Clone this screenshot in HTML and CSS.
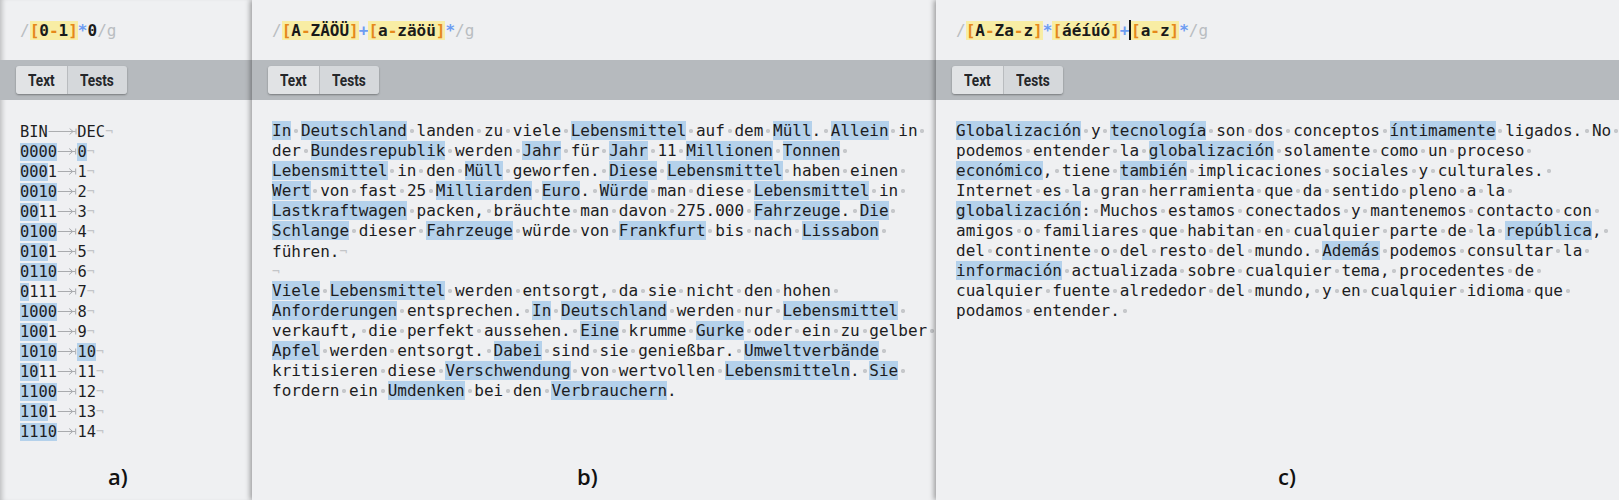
FILE: index.html
```html
<!DOCTYPE html>
<html lang="de">
<head>
<meta charset="utf-8">
<title>Regex tester panels</title>
<link rel="stylesheet" href="styles.css">
</head>
<body>
<div class="page">

  <section class="panel panel-a">
    <div class="regex"><span class="dl">/</span><span class="cls"><span class="br">[</span>0<span class="br">-</span>1<span class="br">]</span></span><span class="q">*</span>0<span class="dl">/g</span></div>
    <div class="toolbar"><div class="tabs"><span class="btn on"><span class="bt">Text</span></span><span class="btn"><span class="bt">Tests</span></span></div></div>
    <div class="code code-a">
      <div class="ln">BIN<svg class="tab w3" viewBox="0 0 30 20"><path d="M0.5 10.5H28M22 7.5L25.5 10.5L22 13.5M28.5 7.5V13.5"/></svg>DEC<i class="p">¬</i></div>
      <div class="ln"><b class="m">0000</b><svg class="tab w4" viewBox="0 0 20 20"><path d="M0.5 10.5H18M12 7.5L15.5 10.5L12 13.5M18.5 7.5V13.5"/></svg><b class="m">0</b><i class="p">¬</i></div>
      <div class="ln"><b class="m">000</b>1<svg class="tab w4" viewBox="0 0 20 20"><path d="M0.5 10.5H18M12 7.5L15.5 10.5L12 13.5M18.5 7.5V13.5"/></svg>1<i class="p">¬</i></div>
      <div class="ln"><b class="m">0010</b><svg class="tab w4" viewBox="0 0 20 20"><path d="M0.5 10.5H18M12 7.5L15.5 10.5L12 13.5M18.5 7.5V13.5"/></svg>2<i class="p">¬</i></div>
      <div class="ln"><b class="m">00</b>11<svg class="tab w4" viewBox="0 0 20 20"><path d="M0.5 10.5H18M12 7.5L15.5 10.5L12 13.5M18.5 7.5V13.5"/></svg>3<i class="p">¬</i></div>
      <div class="ln"><b class="m">0100</b><svg class="tab w4" viewBox="0 0 20 20"><path d="M0.5 10.5H18M12 7.5L15.5 10.5L12 13.5M18.5 7.5V13.5"/></svg>4<i class="p">¬</i></div>
      <div class="ln"><b class="m">010</b>1<svg class="tab w4" viewBox="0 0 20 20"><path d="M0.5 10.5H18M12 7.5L15.5 10.5L12 13.5M18.5 7.5V13.5"/></svg>5<i class="p">¬</i></div>
      <div class="ln"><b class="m">0110</b><svg class="tab w4" viewBox="0 0 20 20"><path d="M0.5 10.5H18M12 7.5L15.5 10.5L12 13.5M18.5 7.5V13.5"/></svg>6<i class="p">¬</i></div>
      <div class="ln"><b class="m">0</b>111<svg class="tab w4" viewBox="0 0 20 20"><path d="M0.5 10.5H18M12 7.5L15.5 10.5L12 13.5M18.5 7.5V13.5"/></svg>7<i class="p">¬</i></div>
      <div class="ln"><b class="m">1000</b><svg class="tab w4" viewBox="0 0 20 20"><path d="M0.5 10.5H18M12 7.5L15.5 10.5L12 13.5M18.5 7.5V13.5"/></svg>8<i class="p">¬</i></div>
      <div class="ln"><b class="m">100</b>1<svg class="tab w4" viewBox="0 0 20 20"><path d="M0.5 10.5H18M12 7.5L15.5 10.5L12 13.5M18.5 7.5V13.5"/></svg>9<i class="p">¬</i></div>
      <div class="ln"><b class="m">1010</b><svg class="tab w4" viewBox="0 0 20 20"><path d="M0.5 10.5H18M12 7.5L15.5 10.5L12 13.5M18.5 7.5V13.5"/></svg><b class="m">10</b><i class="p">¬</i></div>
      <div class="ln"><b class="m">10</b>11<svg class="tab w4" viewBox="0 0 20 20"><path d="M0.5 10.5H18M12 7.5L15.5 10.5L12 13.5M18.5 7.5V13.5"/></svg>11<i class="p">¬</i></div>
      <div class="ln"><b class="m">1100</b><svg class="tab w4" viewBox="0 0 20 20"><path d="M0.5 10.5H18M12 7.5L15.5 10.5L12 13.5M18.5 7.5V13.5"/></svg>12<i class="p">¬</i></div>
      <div class="ln"><b class="m">110</b>1<svg class="tab w4" viewBox="0 0 20 20"><path d="M0.5 10.5H18M12 7.5L15.5 10.5L12 13.5M18.5 7.5V13.5"/></svg>13<i class="p">¬</i></div>
      <div class="ln"><b class="m">1110</b><svg class="tab w4" viewBox="0 0 20 20"><path d="M0.5 10.5H18M12 7.5L15.5 10.5L12 13.5M18.5 7.5V13.5"/></svg>14<i class="p">¬</i></div>
    </div>
    <div class="label label-a">a)</div>
  </section>

  <section class="panel panel-b">
    <div class="regex"><span class="dl">/</span><span class="cls"><span class="br">[</span>A<span class="br">-</span>ZÄÖÜ<span class="br">]</span></span><span class="q">+</span><span class="cls"><span class="br">[</span>a<span class="br">-</span>zäöü<span class="br">]</span></span><span class="q">*</span><span class="dl">/g</span></div>
    <div class="toolbar"><div class="tabs"><span class="btn on"><span class="bt">Text</span></span><span class="btn"><span class="bt">Tests</span></span></div></div>
    <div class="code">
      <div class="ln"><b class="m">In</b><i class="s"> </i><b class="m">Deutschland</b><i class="s"> </i>landen<i class="s"> </i>zu<i class="s"> </i>viele<i class="s"> </i><b class="m">Lebensmittel</b><i class="s"> </i>auf<i class="s"> </i>dem<i class="s"> </i><b class="m">Müll</b>.<i class="s"> </i><b class="m">Allein</b><i class="s"> </i>in<i class="s"> </i></div>
      <div class="ln">der<i class="s"> </i><b class="m">Bundesrepublik</b><i class="s"> </i>werden<i class="s"> </i><b class="m">Jahr</b><i class="s"> </i>für<i class="s"> </i><b class="m">Jahr</b><i class="s"> </i>11<i class="s"> </i><b class="m">Millionen</b><i class="s"> </i><b class="m">Tonnen</b><i class="s"> </i></div>
      <div class="ln"><b class="m">Lebensmittel</b><i class="s"> </i>in<i class="s"> </i>den<i class="s"> </i><b class="m">Müll</b><i class="s"> </i>geworfen.<i class="s"> </i><b class="m">Diese</b><i class="s"> </i><b class="m">Lebensmittel</b><i class="s"> </i>haben<i class="s"> </i>einen<i class="s"> </i></div>
      <div class="ln"><b class="m">Wert</b><i class="s"> </i>von<i class="s"> </i>fast<i class="s"> </i>25<i class="s"> </i><b class="m">Milliarden</b><i class="s"> </i><b class="m">Euro</b>.<i class="s"> </i><b class="m">Würde</b><i class="s"> </i>man<i class="s"> </i>diese<i class="s"> </i><b class="m">Lebensmittel</b><i class="s"> </i>in<i class="s"> </i></div>
      <div class="ln"><b class="m">Lastkraftwagen</b><i class="s"> </i>packen,<i class="s"> </i>bräuchte<i class="s"> </i>man<i class="s"> </i>davon<i class="s"> </i>275.000<i class="s"> </i><b class="m">Fahrzeuge</b>.<i class="s"> </i><b class="m">Die</b><i class="s"> </i></div>
      <div class="ln"><b class="m">Schlange</b><i class="s"> </i>dieser<i class="s"> </i><b class="m">Fahrzeuge</b><i class="s"> </i>würde<i class="s"> </i>von<i class="s"> </i><b class="m">Frankfurt</b><i class="s"> </i>bis<i class="s"> </i>nach<i class="s"> </i><b class="m">Lissabon</b><i class="s"> </i></div>
      <div class="ln">führen.<i class="p">¬</i></div>
      <div class="ln"><i class="p">¬</i></div>
      <div class="ln"><b class="m">Viele</b><i class="s"> </i><b class="m">Lebensmittel</b><i class="s"> </i>werden<i class="s"> </i>entsorgt,<i class="s"> </i>da<i class="s"> </i>sie<i class="s"> </i>nicht<i class="s"> </i>den<i class="s"> </i>hohen<i class="s"> </i></div>
      <div class="ln"><b class="m">Anforderungen</b><i class="s"> </i>entsprechen.<i class="s"> </i><b class="m">In</b><i class="s"> </i><b class="m">Deutschland</b><i class="s"> </i>werden<i class="s"> </i>nur<i class="s"> </i><b class="m">Lebensmittel</b><i class="s"> </i></div>
      <div class="ln">verkauft,<i class="s"> </i>die<i class="s"> </i>perfekt<i class="s"> </i>aussehen.<i class="s"> </i><b class="m">Eine</b><i class="s"> </i>krumme<i class="s"> </i><b class="m">Gurke</b><i class="s"> </i>oder<i class="s"> </i>ein<i class="s"> </i>zu<i class="s"> </i>gelber<i class="s"> </i></div>
      <div class="ln"><b class="m">Apfel</b><i class="s"> </i>werden<i class="s"> </i>entsorgt.<i class="s"> </i><b class="m">Dabei</b><i class="s"> </i>sind<i class="s"> </i>sie<i class="s"> </i>genießbar.<i class="s"> </i><b class="m">Umweltverbände</b><i class="s"> </i></div>
      <div class="ln">kritisieren<i class="s"> </i>diese<i class="s"> </i><b class="m">Verschwendung</b><i class="s"> </i>von<i class="s"> </i>wertvollen<i class="s"> </i><b class="m">Lebensmitteln</b>.<i class="s"> </i><b class="m">Sie</b><i class="s"> </i></div>
      <div class="ln">fordern<i class="s"> </i>ein<i class="s"> </i><b class="m">Umdenken</b><i class="s"> </i>bei<i class="s"> </i>den<i class="s"> </i><b class="m">Verbrauchern</b>.</div>
    </div>
    <div class="label label-b">b)</div>
  </section>

  <section class="panel panel-c">
    <div class="regex"><span class="dl">/</span><span class="cls"><span class="br">[</span>A<span class="br">-</span>Za<span class="br">-</span>z<span class="br">]</span></span><span class="q">*</span><span class="cls"><span class="br">[</span>áéíúó<span class="br">]</span></span><span class="q">+</span><span class="caret"></span><span class="cls"><span class="br">[</span>a<span class="br">-</span>z<span class="br">]</span></span><span class="q">*</span><span class="dl">/g</span></div>
    <div class="toolbar"><div class="tabs"><span class="btn on"><span class="bt">Text</span></span><span class="btn"><span class="bt">Tests</span></span></div></div>
    <div class="code">
      <div class="ln"><b class="m">Globalización</b><i class="s"> </i>y<i class="s"> </i><b class="m">tecnología</b><i class="s"> </i>son<i class="s"> </i>dos<i class="s"> </i>conceptos<i class="s"> </i><b class="m">íntimamente</b><i class="s"> </i>ligados.<i class="s"> </i>No<i class="s"> </i></div>
      <div class="ln">podemos<i class="s"> </i>entender<i class="s"> </i>la<i class="s"> </i><b class="m">globalización</b><i class="s"> </i>solamente<i class="s"> </i>como<i class="s"> </i>un<i class="s"> </i>proceso<i class="s"> </i></div>
      <div class="ln"><b class="m">económico</b>,<i class="s"> </i>tiene<i class="s"> </i><b class="m">también</b><i class="s"> </i>implicaciones<i class="s"> </i>sociales<i class="s"> </i>y<i class="s"> </i>culturales.<i class="s"> </i></div>
      <div class="ln">Internet<i class="s"> </i>es<i class="s"> </i>la<i class="s"> </i>gran<i class="s"> </i>herramienta<i class="s"> </i>que<i class="s"> </i>da<i class="s"> </i>sentido<i class="s"> </i>pleno<i class="s"> </i>a<i class="s"> </i>la<i class="s"> </i></div>
      <div class="ln"><b class="m">globalización</b>:<i class="s"> </i>Muchos<i class="s"> </i>estamos<i class="s"> </i>conectados<i class="s"> </i>y<i class="s"> </i>mantenemos<i class="s"> </i>contacto<i class="s"> </i>con<i class="s"> </i></div>
      <div class="ln">amigos<i class="s"> </i>o<i class="s"> </i>familiares<i class="s"> </i>que<i class="s"> </i>habitan<i class="s"> </i>en<i class="s"> </i>cualquier<i class="s"> </i>parte<i class="s"> </i>de<i class="s"> </i>la<i class="s"> </i><b class="m">república</b>,<i class="s"> </i></div>
      <div class="ln">del<i class="s"> </i>continente<i class="s"> </i>o<i class="s"> </i>del<i class="s"> </i>resto<i class="s"> </i>del<i class="s"> </i>mundo.<i class="s"> </i><b class="m">Además</b><i class="s"> </i>podemos<i class="s"> </i>consultar<i class="s"> </i>la<i class="s"> </i></div>
      <div class="ln"><b class="m">información</b><i class="s"> </i>actualizada<i class="s"> </i>sobre<i class="s"> </i>cualquier<i class="s"> </i>tema,<i class="s"> </i>procedentes<i class="s"> </i>de<i class="s"> </i></div>
      <div class="ln">cualquier<i class="s"> </i>fuente<i class="s"> </i>alrededor<i class="s"> </i>del<i class="s"> </i>mundo,<i class="s"> </i>y<i class="s"> </i>en<i class="s"> </i>cualquier<i class="s"> </i>idioma<i class="s"> </i>que<i class="s"> </i></div>
      <div class="ln">podamos<i class="s"> </i>entender.<i class="s"> </i></div>
    </div>
    <div class="label label-c">c)</div>
  </section>

</div>
</body>
</html>
```

FILE: styles.css
```css
html, body {
  margin: 0;
  padding: 0;
  background: #eff0f2;
}

.page {
  display: flex;
  height: 500px;
  width: 1619px;
  overflow: hidden;
}

.panel {
  position: relative;
  display: flex;
  flex-direction: column;
  height: 500px;
  background: #eff0f2;
  overflow: hidden;
}

.panel-a {
  width: 252px;
  flex: none;
  z-index: 1;
  box-shadow: inset 5px 0 5px -3px rgba(0, 0, 0, 0.22);
}

.panel-b {
  width: 684px;
  flex: none;
  z-index: 2;
  box-shadow: -2px 0 5px rgba(0, 0, 0, 0.35);
}

.panel-c {
  flex: 1;
  z-index: 3;
  box-shadow: -2px 0 5px rgba(0, 0, 0, 0.35);
}

/* regex line */
.regex {
  height: 60px;
  padding: 0 20px;
  display: flex;
  align-items: center;
  font-family: "DejaVu Sans Mono", "Liberation Mono", monospace;
  font-size: 16px;
  font-weight: bold;
  color: #1a1a1a;
  white-space: pre;
}

.regex .dl {
  color: #b9bdc1;
  font-weight: normal;
}

.regex .cls {
  background: #f8eda4;
}

.regex .br {
  color: #e5881b;
}

.regex .q {
  color: #6d9cf2;
}

.regex .caret {
  display: inline-block;
  width: 1.5px;
  height: 20px;
  background: #111;
}

/* toolbar */
.toolbar {
  height: 40px;
  box-sizing: border-box;
  padding: 6px 16px;
  background: #b6babe;
  flex: none;
}

.tabs {
  display: inline-flex;
  height: 28px;
  border-radius: 3px;
  box-shadow: 0 1px 2px rgba(0, 0, 0, 0.35);
  overflow: hidden;
}

.btn {
  display: flex;
  align-items: center;
  padding: 0 12px;
  background: #d5d8db;
  font-family: Roboto, "Liberation Sans", sans-serif;
  font-weight: bold;
  font-size: 17px;
  color: #25272a;
}

.btn.on {
  background: #e1e3e5;
  border-right: 1px solid #b9bcbf;
}

.bt {
  display: inline-block;
  transform: scaleX(0.8);
  transform-origin: left center;
  margin-right: -6px;
}

.btn:not(.on) .bt {
  margin-right: -8px;
}

/* code area */
.code {
  padding: 21px 20px 0;
  font-family: "DejaVu Sans Mono", "Liberation Mono", monospace;
  font-size: 16px;
  line-height: 20px;
  color: #1d1d1f;
}

.code-a {
  font-size: 15.4px;
}

.ln {
  white-space: pre;
  height: 20px;
}

.m {
  font-weight: normal;
  background: #b4d1eb;
}

.s {
  font-style: normal;
  background: radial-gradient(circle, #c6c8cb 0, #c6c8cb 1.8px, rgba(198, 200, 203, 0) 2.4px) no-repeat 50% 58% / 8px 8px;
}

.p {
  font-style: normal;
  color: #c3c5c8;
  font-size: 13px;
  vertical-align: 2px;
}

.tab {
  display: inline-block;
  vertical-align: top;
  height: 20px;
  fill: none;
  stroke: #a9abae;
  stroke-width: 1;
}

.tab.w3 {
  width: 29.5px;
}

.tab.w4 {
  width: 20.4px;
}

/* labels */
.label {
  margin-top: auto;
  padding-bottom: 9px;
  font-family: "Open Sans", "Noto Sans", sans-serif;
  font-size: 22px;
  font-weight: 600;
  line-height: 30px;
  color: #111;
}

.label-a {
  padding-left: 108px;
}

.label-b {
  padding-left: 325px;
}

.label-c {
  padding-left: 342px;
}
```
